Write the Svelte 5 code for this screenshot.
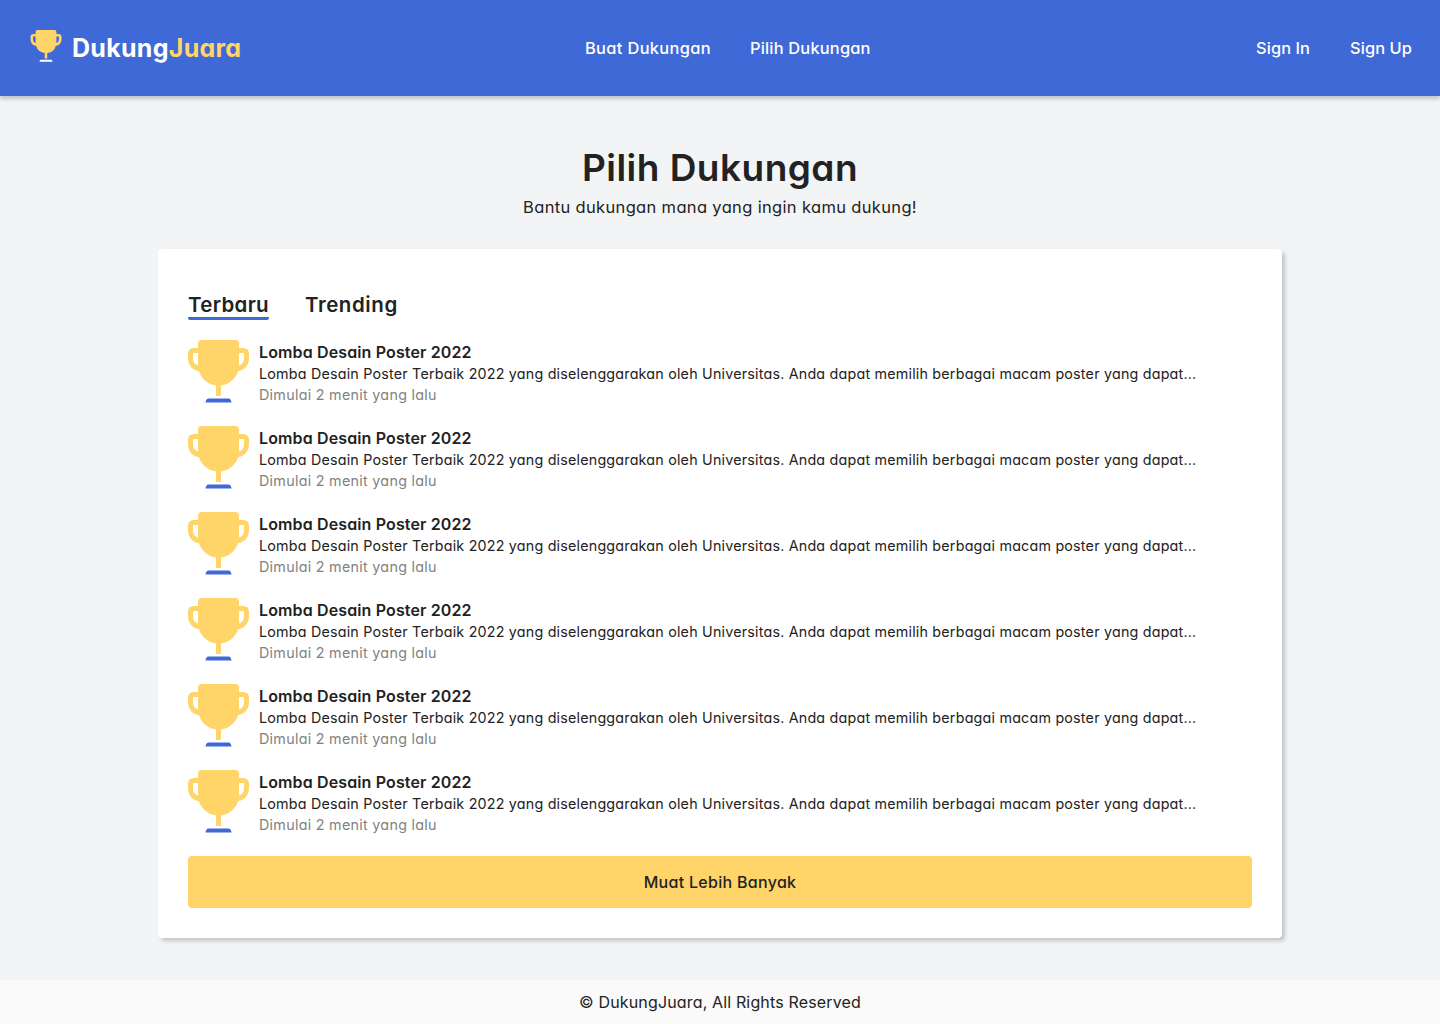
<script>
  const items = Array.from({ length: 6 }, (_, id) => ({
    id,
    title: 'Lomba Desain Poster 2022',
    text: 'Lomba Desain Poster Terbaik 2022 yang diselenggarakan oleh Universitas. Anda dapat memilih berbagai macam poster yang dapat...',
    time: 'Dimulai 2 menit yang lalu'
  }));
</script>

{#snippet trophy(cls)}
  <svg class={cls} viewBox="0 0 61 63" aria-hidden="true">
    <path class="cup" d="M14 0H47Q51 0 51 4V8H55Q61 8 61 14V18C61 25.5 56 30.6 50.1 31A20.5 20.5 0 0 1 33 45.4V56H28V45.4A20.5 20.5 0 0 1 10.9 31C5 30.6 0 25.5 0 18V14Q0 8 6 8H10V4Q10 0 14 0ZM10 13H5V18Q5 24 10 25.5ZM51 13V25.5Q56 24 56 18V13Z" />
    <path class="base" d="M20 58.5H41Q43 59 43.5 62.5H17.5Q18 59 20 58.5Z" />
  </svg>
{/snippet}

<div class="page">
  <header>
    <div class="brand">{@render trophy('logo')}<span class="word">Dukung<b>Juara</b></span></div>
    <nav class="main"><span>Buat Dukungan</span><span>Pilih Dukungan</span></nav>
    <nav class="auth"><span>Sign In</span><span>Sign Up</span></nav>
  </header>
  <main>
    <h1>Pilih Dukungan</h1>
    <p class="sub">Bantu dukungan mana yang ingin kamu dukung!</p>
    <section class="card">
      <div class="tabs"><span class="tab active">Terbaru</span><span class="tab trending">Trending</span></div>
      <div class="list">
        {#each items as item (item.id)}
          <article>
            {@render trophy('award')}
            <div class="info">
              <h2>{item.title}</h2>
              <p class="desc">{item.text}</p>
              <p class="time">{item.time}</p>
            </div>
          </article>
        {/each}
      </div>
      <button>Muat Lebih Banyak</button>
    </section>
  </main>
  <footer>© DukungJuara, All Rights Reserved</footer>
</div>

<style>
  :global(body) { margin: 0; }
  .page { min-height: 1024px; display: flex; flex-direction: column; background: #f3f4f6; color: #222; font-family: Inter, 'Open Sans', sans-serif; font-feature-settings: 'cv11'; font-size: 16px; }
  h1, h2, p { margin: 0; }
  header { height: 96px; box-sizing: border-box; padding: 0 28px 0 30px; display: grid; grid-template-columns: 555px 1fr auto; align-items: center; background: #3f69d7; color: #fff; font-weight: 500; box-shadow: 0 3px 4px rgba(0,0,0,.2); }
  .brand { display: flex; align-items: center; gap: 10px; }
  .word { font-size: 25px; line-height: 36px; font-weight: 700; letter-spacing: .28px; }
  .word b { font-weight: inherit; color: #ffd469; }
  .cup { fill: #ffd469; fill-rule: evenodd; }
  .base { fill: #3f69d7; }
  .logo { width: 32px; height: 32px; margin-bottom: 4px; }
  .logo .base { fill: #fff; }
  nav { display: flex; gap: 39px; font-size: 16.4px; letter-spacing: .2px; }
  .main span:first-child { letter-spacing: .35px; }
  .auth { gap: 40px; letter-spacing: .08px; }
  main { flex: 1; display: flex; flex-direction: column; align-items: center; padding-top: 45px; }
  h1 { font-size: 37px; line-height: 54px; font-weight: 600; letter-spacing: .47px; }
  .sub { font-size: 16.5px; line-height: 24px; letter-spacing: .34px; }
  .card { width: 1124px; height: 689px; box-sizing: border-box; margin-top: 30px; padding: 40px 30px 30px; background: #fff; border-radius: 4px; box-shadow: 3px 3px 4px rgba(0,0,0,.2); }
  .tabs { display: flex; gap: 36px; font-size: 20.5px; font-weight: 600; line-height: 31px; }
  .tab { height: 31px; letter-spacing: .31px; }
  .trending { letter-spacing: .57px; }
  .active { background: linear-gradient(#3f69d7, #3f69d7) bottom / 100% 3px no-repeat; border-radius: 0 0 2px 2px; }
  .list { margin-top: 20px; display: grid; gap: 23px; }
  article { display: flex; gap: 10px; height: 63px; }
  .award { width: 61px; height: 63px; }
  h2 { font-size: 16px; line-height: 24px; font-weight: 600; letter-spacing: .13px; }
  .desc, .time { font-size: 14.3px; line-height: 21px; letter-spacing: .204px; }
  .desc { margin-top: -1px; }
  .time { color: #828282; letter-spacing: .29px; }
  button { margin-top: 23px; width: 100%; height: 52px; border: 0; border-radius: 4px; background: #ffd469; font: inherit; font-feature-settings: inherit; font-weight: 500; letter-spacing: .3px; color: #222; }
  footer { height: 44px; line-height: 44px; text-align: center; letter-spacing: .15px; background: #fafafa; }
</style>
